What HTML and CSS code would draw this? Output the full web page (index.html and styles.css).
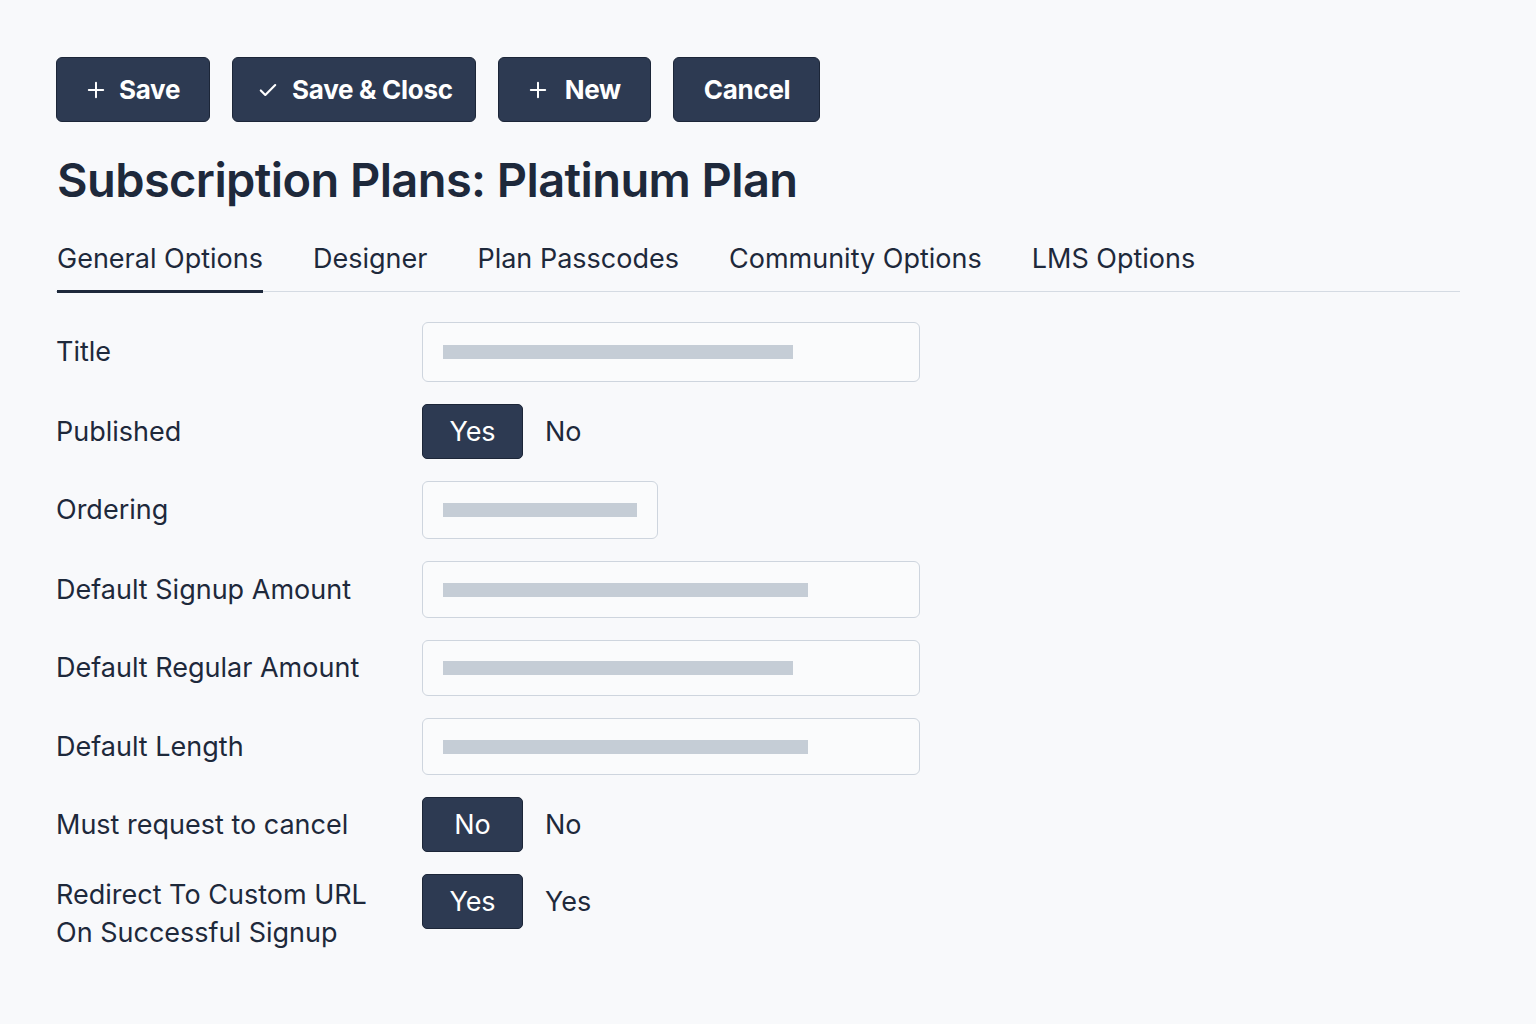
FILE: index.html
```html
<!DOCTYPE html>
<html lang="en">
<head>
<meta charset="utf-8">
<title>Subscription Plans: Platinum Plan</title>
<link rel="stylesheet" href="styles.css">
</head>
<body>
<div class="page">
  <div class="toolbar">
    <button class="btn"><svg class="ico" viewBox="0 0 20 20"><path d="M10 2v16M2 10h16"/></svg><span>Save</span></button>
    <button class="btn btn-close"><svg class="ico ico-check" viewBox="0 0 20 20"><path d="M2 10.5l5 5L18 4.5"/></svg><span>Save &amp; Closc</span></button>
    <button class="btn btn-new"><svg class="ico" viewBox="0 0 20 20"><path d="M10 2v16M2 10h16"/></svg><span>New</span></button>
    <button class="btn"><span>Cancel</span></button>
  </div>

  <h1 class="title">Subscription Plans: Platinum Plan</h1>

  <nav class="tabs">
    <a class="tab active">General Options</a>
    <a class="tab">Designer</a>
    <a class="tab">Plan Passcodes</a>
    <a class="tab">Community Options</a>
    <a class="tab">LMS Options</a>
  </nav>

  <div class="form">
    <div class="row">
      <label class="label">Title</label>
      <div class="input input-lg"><span class="bar" style="width:350px"></span></div>
    </div>
    <div class="row">
      <label class="label">Published</label>
      <div class="toggle"><span class="toggle-btn">Yes</span><span class="toggle-alt">No</span></div>
    </div>
    <div class="row">
      <label class="label">Ordering</label>
      <div class="input input-sm"><span class="bar" style="width:194px"></span></div>
    </div>
    <div class="row">
      <label class="label">Default Signup Amount</label>
      <div class="input"><span class="bar" style="width:365px"></span></div>
    </div>
    <div class="row">
      <label class="label">Default Regular Amount</label>
      <div class="input input-md"><span class="bar" style="width:350px"></span></div>
    </div>
    <div class="row">
      <label class="label">Default Length</label>
      <div class="input"><span class="bar" style="width:365px"></span></div>
    </div>
    <div class="row">
      <label class="label">Must request to cancel</label>
      <div class="toggle"><span class="toggle-btn">No</span><span class="toggle-alt">No</span></div>
    </div>
    <div class="row row-top">
      <label class="label label-multi">Redirect To Custom URL<br>On Successful Signup</label>
      <div class="toggle"><span class="toggle-btn">Yes</span><span class="toggle-alt">Yes</span></div>
    </div>
  </div>
</div>
</body>
</html>
```

FILE: styles.css
```css
* { box-sizing: border-box; }

html, body {
  margin: 0;
  padding: 0;
  background: #f8f9fb;
  font-family: Inter, "Noto Sans", "Liberation Sans", sans-serif;
  color: #1e293b;
}

.page {
  width: 1460px;
  padding: 57px 0 0 56px;
}

.toolbar {
  display: flex;
  gap: 22px;
}

.btn {
  display: flex;
  align-items: center;
  gap: 14px;
  height: 65px;
  padding: 0 29px 0 30px;
  background: #2d3a52;
  border: 1px solid #1c2638;
  border-radius: 6px;
  color: #ffffff;
  font-family: Inter, "Liberation Sans", sans-serif;
  font-size: 26px;
  font-weight: 700;
  letter-spacing: -0.3px;
  cursor: pointer;
}

.btn-close {
  gap: 15px;
  padding: 0 22px 0 26px;
}

.btn-new {
  gap: 18px;
}

.ico {
  width: 18px;
  height: 18px;
  fill: none;
  stroke: #ffffff;
  stroke-width: 2.2;
  stroke-linecap: round;
  stroke-linejoin: round;
}

.ico-check { stroke-width: 2.4; }

.title {
  margin: 30px 0 0 1px;
  font-size: 47px;
  line-height: 56px;
  font-weight: 600;
  letter-spacing: -0.6px;
  color: #1e293b;
}

.tabs {
  display: flex;
  gap: 50px;
  margin-top: 34px;
  padding-left: 1px;
  border-bottom: 1.5px solid #d5dbe3;
}

.tab {
  display: block;
  padding-bottom: 14px;
  font-size: 27px;
  line-height: 34px;
  color: #1e293b;
  border-bottom: 3px solid transparent;
  margin-bottom: -2px;
}

.tab.active {
  border-bottom-color: #1e293b;
}

.form {
  display: flex;
  flex-direction: column;
  gap: 22px;
  margin-top: 30px;
}

.row {
  display: grid;
  grid-template-columns: 366px auto;
  align-items: center;
}

.row-top { align-items: start; }

.label {
  font-size: 27px;
  line-height: 34px;
  color: #1e293b;
}

.label-multi {
  line-height: 38px;
  margin-top: 2px;
}

.input {
  display: flex;
  align-items: center;
  width: 498px;
  height: 57px;
  padding-left: 20px;
  background: #fafbfc;
  border: 1.5px solid #ced5de;
  border-radius: 6px;
}

.input-lg { height: 60px; }

.input-md { height: 56px; }

.input-sm { width: 236px; height: 58px; }

.bar {
  display: block;
  height: 14px;
  background: #c5cdd6;
}

.toggle {
  display: flex;
  align-items: center;
  gap: 22px;
}

.toggle-btn {
  display: flex;
  align-items: center;
  justify-content: center;
  width: 101px;
  height: 55px;
  background: #2d3a52;
  border: 1px solid #1c2638;
  border-radius: 5px;
  color: #ffffff;
  font-size: 27px;
}

.toggle-alt {
  font-size: 27px;
  color: #1e293b;
}
```
